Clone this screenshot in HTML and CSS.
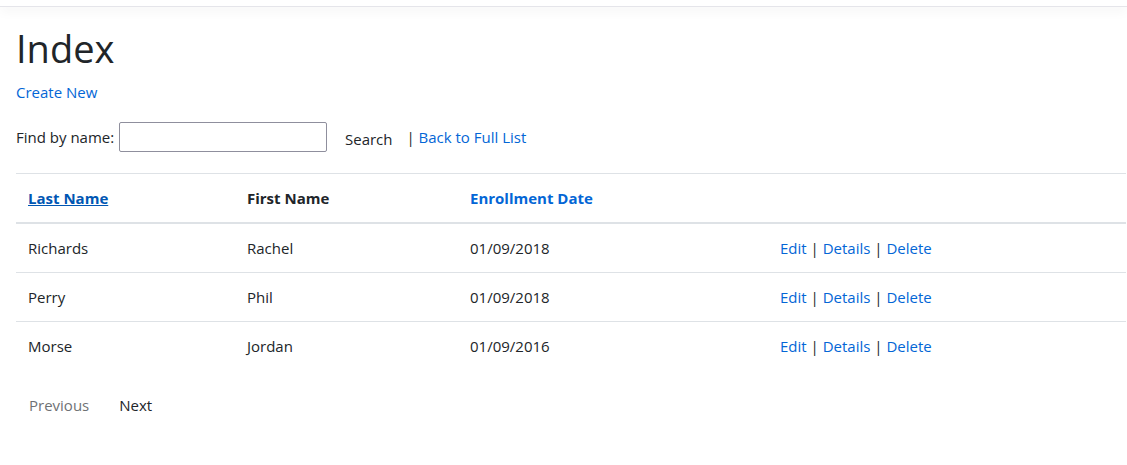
FILE: index.html
```html
<!DOCTYPE html>
<html>
<head>
<meta charset="utf-8">
<title>Index</title>
<link rel="stylesheet" href="styles.css">
</head>
<body>
<header class="navbar"></header>
<main class="container">
  <h1 class="title">Index</h1>
  <p class="create"><a href="#">Create New</a></p>
  <form class="find">
    <p class="find-row">Find by name: <input class="find-input" type="text"> <input class="btn" type="submit" value="Search"> | <a href="#">Back to Full List</a></p>
  </form>
  <table class="table">
    <colgroup>
      <col class="c1"><col class="c2"><col class="c3"><col class="c4">
    </colgroup>
    <thead>
      <tr>
        <th><a class="sorted" href="#">Last Name</a></th>
        <th>First Name</th>
        <th><a href="#">Enrollment Date</a></th>
        <th></th>
      </tr>
    </thead>
    <tbody>
      <tr>
        <td>Richards</td><td>Rachel</td><td>01/09/2018</td>
        <td><a href="#">Edit</a> | <a href="#">Details</a> | <a href="#">Delete</a></td>
      </tr>
      <tr>
        <td>Perry</td><td>Phil</td><td>01/09/2018</td>
        <td><a href="#">Edit</a> | <a href="#">Details</a> | <a href="#">Delete</a></td>
      </tr>
      <tr>
        <td>Morse</td><td>Jordan</td><td>01/09/2016</td>
        <td><a href="#">Edit</a> | <a href="#">Details</a> | <a href="#">Delete</a></td>
      </tr>
    </tbody>
  </table>
  <div class="pager">
    <a class="btn disabled" href="#">Previous</a>
    <a class="btn" href="#">Next</a>
  </div>
</main>
</body>
</html>
```

FILE: styles.css
```css
html, body {
  margin: 0;
  padding: 0;
  background: #fff;
}
body {
  font-family: "Open Sans", "Noto Sans", sans-serif;
  font-size: 15px;
  line-height: 24px;
  color: #212529;
  overflow-x: hidden;
}
a {
  color: #0366d6;
  text-decoration: none;
}
.navbar {
  display: block;
  height: 6px;
  border-bottom: 1px solid #e5e5ea;
  box-shadow: 0 4px 12px rgba(0, 0, 0, 0.05);
  margin-bottom: 17px;
}
.container {
  padding-left: 16px;
  width: 1110px;
}
.title {
  font-size: 38px;
  font-weight: 400;
  line-height: 48px;
  margin: 0 0 8px 0;
}
.create {
  margin: 0 0 16px 0;
}
.find {
  margin: 0;
}
.find-row {
  margin: 0 0 15px 0;
}
.find-input {
  font: inherit;
  width: 208px;
  height: 30px;
  box-sizing: border-box;
  border: 1px solid #8f8f9d;
  border-radius: 2px;
  padding: 1px 2px;
  margin: 0 0 0 1px;
}
.btn {
  display: inline-block;
  font: inherit;
  color: #212529;
  background: transparent;
  border: 1px solid transparent;
  padding: 6px 12px;
  line-height: 24px;
  vertical-align: middle;
  margin: 0;
}
.find-row .btn {
  margin-left: 1px;
  padding-right: 9px;
}
.btn.disabled {
  opacity: 0.65;
}
.table {
  width: 1110px;
  border-collapse: collapse;
  margin-bottom: 16px;
}
.c1 { width: 219px; }
.c2 { width: 223px; }
.c3 { width: 310px; }
.table th, .table td {
  padding: 12px;
  text-align: left;
  border-top: 1px solid #dee2e6;
  vertical-align: top;
}
.table th {
  font-weight: 700;
  vertical-align: bottom;
  border-bottom: 2px solid #dee2e6;
}
.sorted {
  color: #0056b3;
  text-decoration: underline;
}
.pager {
  display: flex;
  gap: 4px;
}
```
